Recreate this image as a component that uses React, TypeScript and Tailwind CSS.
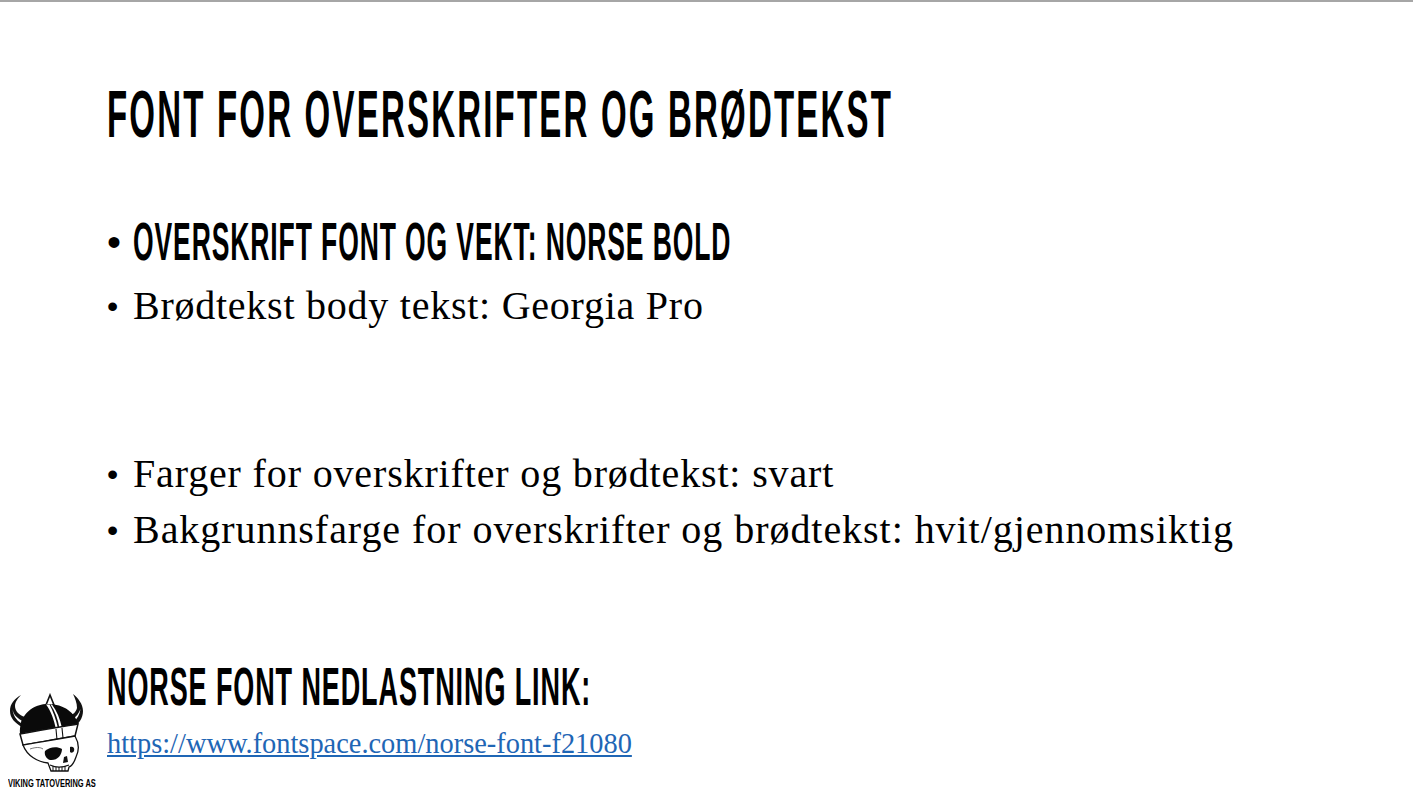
const norse = "font-['Liberation_Sans',sans-serif] font-bold uppercase text-black whitespace-nowrap block origin-left";
const body = "font-['Liberation_Serif',serif] text-[40px] leading-[44px] text-black whitespace-nowrap";

function Logo() {
  return (
    <div className="flex flex-col ml-[8px] mb-[7px]">
      <svg viewBox="8 692 77 80" className="w-[77px] h-[80px]">
        {/* horns */}
        <path d="M21 694C14 698 10 703 10 710C10 717 15 722 22 726L25 716C19 714 15 710 15 705C15 701 18 697 21 694Z" fill="#111" />
        <path d="M12.5 708C13 713 17 717 21.5 719.5L21 722C16 719 13 714 12.5 708Z" fill="#fff" />
        <path d="M73 693C78 697 83 703 83 710C83 717 79 723 72 728L68 715C73 714 76 711 77 707C77 702 75 697 73 693Z" fill="#111" />
        <path d="M80.5 708C80 713 77 718 73 722L72 719C76 716 79 712 80.5 708Z" fill="#fff" />
        {/* spike */}
        <path d="M50 694L46 704L54 704Z" fill="#fff" stroke="#111" strokeWidth="1.6" />
        {/* helmet dome */}
        <path d="M20 733C19 716 30 704 46 703C62 702 76 711 78 724C60 726 38 729 20 733Z" fill="#0a0a0a" />
        <path d="M46 703.5L52 703.5C57 710 60 718 62 727L56 728C54 719 51 710 46 703.5Z" fill="#fff" />
        <path d="M49.5 703.5L50.5 703.5C55 710 58 718 59.5 727.5L58 727.5C56 718 53 710 49.5 703.5Z" fill="#111" />
        {/* brim */}
        <path d="M20 733C40 729 60 726 78 723L75 735C60 738 40 741 23 744Z" fill="#fff" stroke="#111" strokeWidth="1.5" />
        <path d="M56 728L57 739M62 727L63 737" stroke="#111" strokeWidth="1.1" />
        {/* skull */}
        <path d="M23 744C40 741 60 738 75 735C79 742 79 750 76 756C74 762 72 765 69 766L68 770L51 770L48 762C38 761 27 755 23 744Z" fill="#fff" stroke="#111" strokeWidth="1.3" />
        <path d="M30 748C36 746 40 746 43 748" stroke="#555" strokeWidth="0.8" fill="none" />
        <path d="M45 750C49 746 57 745 62 748C62 754 57 760 50 759C46 758 44 753 45 750Z" fill="#0a0a0a" />
        <path d="M70 746C73 745 75 747 74 750C73 752 71 752 70 751Z" fill="#111" />
        <path d="M64 756L67 755L68 761L63 762Z" fill="#111" />
        <path d="M50 764C56 767 62 767 69 764" stroke="#111" strokeWidth="1.2" fill="none" />
        <path d="M53 765L53 770M56 766L56 770M59 766L59 770M62 766L62 770M65 765L65 770" stroke="#111" strokeWidth="1" />
      </svg>
      <span className={`${norse} text-[11px] leading-[12px] mt-[4px] scale-x-[0.68]`}>Viking Tatovering AS</span>
    </div>
  );
}

function Bullet({ big, children }: { big?: boolean; children: React.ReactNode }) {
  return (
    <li className="flex items-center">
      <span className={`w-[26px] shrink-0 font-['Liberation_Sans',sans-serif] text-black leading-none ${big ? "text-[40px]" : "text-[32px]"}`}>•</span>
      {children}
    </li>
  );
}

export default function App() {
  return (
    <div className="h-[796px] w-[1413px] overflow-hidden bg-white border-t-2 border-[#a6a6a6] flex">
      <div className="w-[107px] shrink-0 flex items-end">
        <Logo />
      </div>
      <div className="flex-1 flex flex-col">
        <h1 className={`${norse} text-[66px] leading-[76px] mt-[74px] tracking-[4.4px] scale-x-50`}>Font for overskrifter og brødtekst</h1>
        <ul className="mt-[59px] flex flex-col gap-[11px]">
          <Bullet big>
            <span className={`${norse} text-[53px] leading-[62px] tracking-[1.8px] scale-x-50`}>Overskrift font og vekt: Norse Bold</span>
          </Bullet>
          <Bullet>
            <span className={`${body} tracking-[0.75px]`}>Brødtekst body tekst: Georgia Pro</span>
          </Bullet>
        </ul>
        <ul className="mt-[124px] flex flex-col gap-[12px]">
          <Bullet>
            <span className={`${body} tracking-[0.85px]`}>Farger for overskrifter og brødtekst: svart</span>
          </Bullet>
          <Bullet>
            <span className={`${body} tracking-[0.95px]`}>Bakgrunnsfarge for overskrifter og brødtekst: hvit/gjennomsiktig</span>
          </Bullet>
        </ul>
        <h2 className={`${norse} text-[54px] leading-[62px] mt-[103px] tracking-[1.8px] scale-x-50`}>Norse font nedlastning link:</h2>
        <a href="#" className="font-['Liberation_Serif',serif] text-[28.4px] leading-[34px] mt-[10px] text-[#1f66b5] underline w-fit">https://www.fontspace.com/norse-font-f21080</a>
      </div>
    </div>
  );
}
